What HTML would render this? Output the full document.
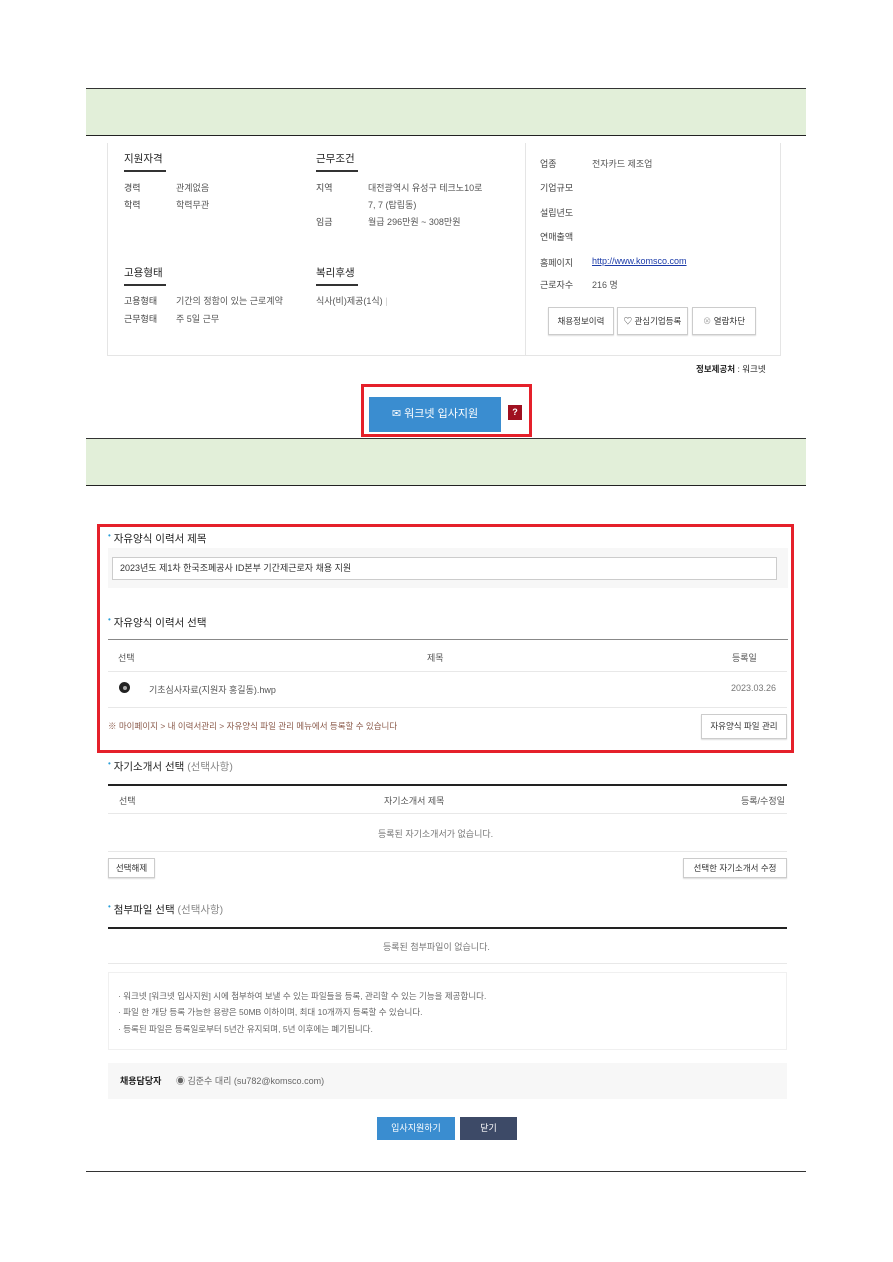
<!DOCTYPE html>
<html><head><meta charset="utf-8"><style>
*{margin:0;padding:0;box-sizing:border-box}
body{width:893px;height:1262px;background:#fff;position:relative;font-family:"Liberation Sans","Noto Sans CJK KR",sans-serif;color:#555;font-size:9px;overflow:hidden}
.a{position:absolute;white-space:nowrap}
.band{position:absolute;left:86px;width:720px;height:48px;background:#e2efd9;border-top:1px solid #333;border-bottom:1.5px solid #222}
.h{font-size:10.5px;color:#222}
.ul{position:absolute;height:2px;background:#333;width:42px}
.k{color:#444}
.btn{position:absolute;border:1px solid #ccc;background:#fff;color:#333;font-size:8.5px;text-align:center;box-shadow:0 1px 1px #ddd}
.line{position:absolute;left:108px;width:679px;height:1px;background:#e8e8e8}
.dl{position:absolute;left:108px;width:679px;height:1.5px;background:#222}
.dot{color:#2a9fd8;font-size:8px;vertical-align:top}
</style></head><body>
<div class="band" style="top:88px"></div>
<div class="a" style="left:107px;top:143px;width:674px;height:213px;border:1px solid #e5e5e5;border-top:none"></div>
<div class="a" style="left:525px;top:143px;width:1px;height:213px;background:#e5e5e5"></div>
<div class="a h" style="left:124px;top:151px">지원자격</div><div class="ul" style="left:124px;top:170px"></div>
<div class="a h" style="left:316px;top:151px">근무조건</div><div class="ul" style="left:316px;top:170px"></div>
<div class="a k" style="left:124px;top:181px">경력</div><div class="a" style="left:176px;top:181px">관계없음</div>
<div class="a k" style="left:124px;top:198px">학력</div><div class="a" style="left:176px;top:198px">학력무관</div>
<div class="a k" style="left:316px;top:181px">지역</div><div class="a" style="left:368px;top:181px">대전광역시 유성구 테크노10로</div>
<div class="a" style="left:368px;top:198px">7, 7 (탑립동)</div>
<div class="a k" style="left:316px;top:215px">임금</div><div class="a" style="left:368px;top:215px">월급 296만원 ~ 308만원</div>
<div class="a h" style="left:124px;top:265px">고용형태</div><div class="ul" style="left:124px;top:284px"></div>
<div class="a h" style="left:316px;top:265px">복리후생</div><div class="ul" style="left:316px;top:284px"></div>
<div class="a k" style="left:124px;top:294px">고용형태</div><div class="a" style="left:176px;top:294px">기간의 정함이 있는 근로계약</div>
<div class="a k" style="left:124px;top:312px">근무형태</div><div class="a" style="left:176px;top:312px">주 5일 근무</div>
<div class="a" style="left:316px;top:294px">식사(비)제공(1식) <span style="color:#ccc">|</span></div>
<div class="a k" style="left:540px;top:157px">업종</div><div class="a" style="left:592px;top:157px">전자카드 제조업</div>
<div class="a k" style="left:540px;top:181px">기업규모</div>
<div class="a k" style="left:540px;top:206px">설립년도</div>
<div class="a k" style="left:540px;top:230px">연매출액</div>
<div class="a k" style="left:540px;top:256px">홈페이지</div><div class="a" style="left:592px;top:256px;color:#1a3aa8;text-decoration:underline">http://www.komsco.com</div>
<div class="a k" style="left:540px;top:278px">근로자수</div><div class="a" style="left:592px;top:278px">216 명</div>
<div class="btn" style="left:548px;top:307px;width:66px;height:28px;line-height:26px">채용정보이력</div>
<div class="btn" style="left:617px;top:307px;width:71px;height:28px;line-height:26px">♡ 관심기업등록</div>
<div class="btn" style="left:692px;top:307px;width:64px;height:28px;line-height:26px"><span style="color:#aaa">⊗</span> 열람차단</div>
<div class="a" style="left:696px;top:363px;color:#222;font-size:8.5px"><b>정보제공처</b> : 워크넷</div>
<div class="a" style="left:361px;top:384px;width:171px;height:53px;border:3px solid #e5202a"></div>
<div class="a" style="left:369px;top:397px;width:132px;height:35px;background:#3a8dd0;color:#fff;font-size:11px;line-height:35px;text-align:center">✉ 워크넷 입사지원</div>
<div class="a" style="left:508px;top:405px;width:14px;height:15px;background:#a01020;color:#fff;font-size:9px;font-weight:bold;text-align:center;line-height:15px">?</div>
<div class="band" style="top:438px"></div>

<div class="a" style="left:97px;top:524px;width:697px;height:229px;border:3px solid #e5202a"></div>
<div class="a h" style="left:108px;top:531px"><span class="dot">•</span> 자유양식 이력서 제목</div>
<div class="a" style="left:108px;top:548px;width:680px;height:40px;background:#f7f7f7"></div>
<div class="a" style="left:112px;top:557px;width:665px;height:23px;background:#fff;border:1px solid #ccc;color:#333;line-height:21px;padding-left:7px">2023년도 제1차 한국조폐공사 ID본부 기간제근로자 채용 지원</div>
<div class="a h" style="left:108px;top:615px"><span class="dot">•</span> 자유양식 이력서 선택</div>
<div class="a" style="left:108px;top:639px;width:680px;height:1px;background:#888"></div>
<div class="a" style="left:118px;top:651px">선택</div><div class="a" style="left:427px;top:651px">제목</div><div class="a" style="left:732px;top:651px">등록일</div>
<div class="line" style="top:671px"></div>
<div class="a" style="left:119px;top:682px;width:11px;height:11px;border-radius:50%;background:#222;border:2px solid #222"><div style="margin:1.5px;width:4px;height:4px;border-radius:50%;background:#aaa"></div></div>
<div class="a" style="left:149px;top:683px">기초심사자료(지원자 홍길동).hwp</div>
<div class="a" style="left:731px;top:683px;color:#777">2023.03.26</div>
<div class="line" style="top:707px"></div>
<div class="a" style="left:108px;top:720px;color:#8a5a4a;font-size:8.5px">※ 마이페이지 &gt; 내 이력서관리 &gt; 자유양식 파일 관리 메뉴에서 등록할 수 있습니다</div>
<div class="btn" style="left:701px;top:714px;width:86px;height:25px;line-height:23px">자유양식 파일 관리</div>

<div class="a h" style="left:108px;top:759px"><span class="dot">•</span> 자기소개서 선택 <span style="color:#888">(선택사항)</span></div>
<div class="dl" style="top:784px"></div>
<div class="a" style="left:119px;top:794px">선택</div><div class="a" style="left:384px;top:794px">자기소개서 제목</div><div class="a" style="left:741px;top:794px">등록/수정일</div>
<div class="line" style="top:813px"></div>
<div class="a" style="left:378px;top:827px;color:#777">등록된 자기소개서가 없습니다.</div>
<div class="line" style="top:851px"></div>
<div class="btn" style="left:108px;top:858px;width:47px;height:20px;line-height:18px">선택해제</div>
<div class="btn" style="left:683px;top:858px;width:104px;height:20px;line-height:18px">선택한 자기소개서 수정</div>
<div class="a h" style="left:108px;top:902px"><span class="dot">•</span> 첨부파일 선택 <span style="color:#888">(선택사항)</span></div>
<div class="dl" style="top:927px"></div>
<div class="a" style="left:383px;top:940px;color:#777">등록된 첨부파일이 없습니다.</div>
<div class="line" style="top:963px"></div>
<div class="a" style="left:108px;top:972px;width:679px;height:78px;border:1px solid #f0f0f0"></div>
<div class="a" style="left:118px;top:990px;font-size:8.5px;color:#666">· 워크넷 [워크넷 입사지원] 시에 첨부하여 보낼 수 있는 파일들을 등록, 관리할 수 있는 기능을 제공합니다.</div>
<div class="a" style="left:118px;top:1006px;font-size:8.5px;color:#666">· 파일 한 개당 등록 가능한 용량은 50MB 이하이며, 최대 10개까지 등록할 수 있습니다.</div>
<div class="a" style="left:118px;top:1023px;font-size:8.5px;color:#666">· 등록된 파일은 등록일로부터 5년간 유지되며, 5년 이후에는 폐기됩니다.</div>
<div class="a" style="left:108px;top:1063px;width:679px;height:36px;background:#f7f7f7"></div>
<div class="a" style="left:120px;top:1074px;color:#222"><b>채용담당자</b></div>
<div class="a" style="left:176px;top:1074px;color:#666">◉ 김준수 대리 (su782@komsco.com)</div>
<div class="a" style="left:377px;top:1117px;width:78px;height:23px;background:#3a8dd0;color:#fff;text-align:center;line-height:23px">입사지원하기</div>
<div class="a" style="left:460px;top:1117px;width:57px;height:23px;background:#3d4a67;color:#fff;text-align:center;line-height:23px">닫기</div>
<div class="a" style="left:86px;top:1171px;width:720px;height:1px;background:#333"></div>
</body></html>
